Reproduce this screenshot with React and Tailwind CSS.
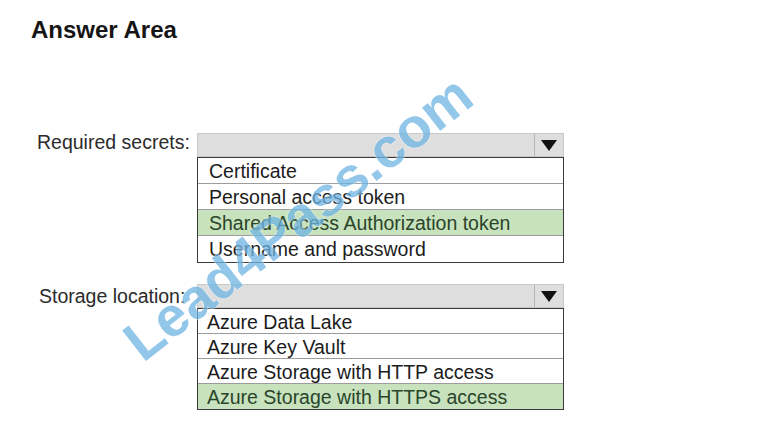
const secrets = [
  { label: "Certificate" },
  { label: "Personal access token" },
  { label: "Shared Access Authorization token", picked: true },
  { label: "Username and password" },
];

const locations = [
  { label: "Azure Data Lake" },
  { label: "Azure Key Vault" },
  { label: "Azure Storage with HTTP access" },
  { label: "Azure Storage with HTTPS access", picked: true },
];

function Arrow() {
  return (
    <svg width="16" height="11" viewBox="0 0 16 11">
      <polygon points="0,0 16,0 8,11" fill="#111" />
    </svg>
  );
}

function DropList({ items, rowClass }) {
  return (
    <div className="w-[367px]">
      <div className="flex h-[24px] border border-[#c9c9c9] bg-[#dedede]">
        <div className="flex-1" />
        <div className="flex w-[29px] items-center justify-center border-l border-[#b5b5b5]">
          <Arrow />
        </div>
      </div>
      <div className="border border-[#3a3a3a] bg-white">
        {items.map((item, i) => (
          <div
            key={item.label}
            className={
              rowClass +
              (i < items.length - 1 ? " border-b border-[#9c9c9c]" : "") +
              (item.picked ? " bg-[#c7e2bd] text-[#2a452a]" : " text-[#1c1c1c]")
            }
          >
            {item.label}
          </div>
        ))}
      </div>
    </div>
  );
}

export default function App() {
  return (
    <main className="relative h-[441px] w-[768px] overflow-hidden bg-white font-['Liberation_Sans',Arial,sans-serif]">

      <h1 className="pl-[31px] pt-[18px] text-[24px] font-bold leading-[24px] text-[#151515]">
        Answer Area
      </h1>

      <div className="mt-[91px] flex pl-[37px]">
        <div className="-mt-[3px] w-[160px] text-[19.5px] leading-[24px] text-[#2b2b2b]">
          Required secrets:
        </div>
        <DropList
          items={secrets}
          rowClass="h-[26px] pl-[11px] text-[19.5px] leading-[26px]"
        />
      </div>

      <div className="mt-[21px] flex pl-[39px]">
        <div className="w-[158px] text-[19.5px] leading-[24px] text-[#2b2b2b]">
          Storage location:
        </div>
        <DropList
          items={locations}
          rowClass="h-[25px] pl-[9px] text-[19.5px] leading-[27px]"
        />
      </div>

      {/* watermark */}
      <div className="pointer-events-none absolute left-[298px] top-[218px] -translate-x-1/2 -translate-y-1/2 -rotate-[38deg] whitespace-nowrap text-[56px] font-bold leading-none text-[#6fb5e3] opacity-75 [text-shadow:0_0_2px_#ffffff,0_0_1px_#ffffff]">
        Lead4Pass.com
      </div>

    </main>
  );
}
